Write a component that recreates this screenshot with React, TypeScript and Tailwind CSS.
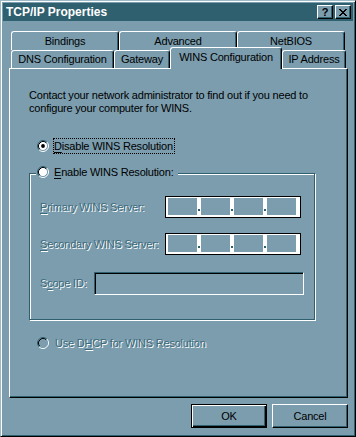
import React from 'react';

function Radio({ checked = false, disabled = false }: { checked?: boolean; disabled?: boolean }) {
  return (
    <svg width="12" height="12" viewBox="0 0 12 12" className="shrink-0 block">
      <circle cx="6" cy="6" r="4.5" fill={disabled ? '#7b9dae' : '#ffffff'} />
      <path d="M2.11 9.89 A5.5 5.5 0 0 1 9.89 2.11" fill="none" stroke="#2f6070" strokeWidth="1" />
      <path d="M9.89 2.11 A5.5 5.5 0 0 1 2.11 9.89" fill="none" stroke="#ffffff" strokeWidth="1" />
      <path d="M2.82 9.18 A4.5 4.5 0 0 1 9.18 2.82" fill="none" stroke="#000000" strokeWidth="1" />
      <path d="M9.18 2.82 A4.5 4.5 0 0 1 2.82 9.18" fill="none" stroke="#7b9dae" strokeWidth="1" />
      {checked && <circle cx="6" cy="6" r="1.9" fill="#000000" />}
    </svg>
  );
}

function U({ children }: { children: React.ReactNode }) {
  return <span className="underline underline-offset-[2px]">{children}</span>;
}

const dis = 'text-[#3d6a7a] [text-shadow:1px_1px_0_#ffffff]';

function IpBox() {
  const seg = 'w-[29px] h-full bg-[#7b9dae]';
  const sep = (
    <div className="relative w-[4px] h-full">
      <div className="absolute left-[1px] bottom-[4px] w-[2px] h-[2px] bg-[#2f6070]" />
    </div>
  );
  return (
    <div className="flex h-[22px] w-[136px] border border-black bg-white pl-[2px] pr-[4px] pt-[1px] pb-[2px]">
      <div className={seg} />
      {sep}
      <div className={seg} />
      {sep}
      <div className={seg} />
      {sep}
      <div className={seg} />
    </div>
  );
}

function BackTab({ label, cls }: { label: string; cls: string }) {
  return (
    <div
      className={`${cls} h-full flex items-center justify-center border-t border-l border-r border-t-white border-l-white border-r-black rounded-t-[3px] shadow-[inset_-1px_0_0_#2f6070]`}
    >
      {label}
    </div>
  );
}

function FrontTab({ label, cls }: { label: string; cls: string }) {
  return (
    <div
      className={`${cls} h-[18px] flex items-center justify-center border-t border-l border-r border-t-white border-l-white border-r-black rounded-t-[3px] shadow-[inset_-1px_0_0_#2f6070]`}
    >
      {label}
    </div>
  );
}

export default function App() {
  return (
    <div className="w-[356px] h-[437px] bg-[#7b9dae] font-['Liberation_Sans',Arial,sans-serif] text-[11px] leading-[13px] tracking-[-0.2px] text-black border border-t-[#9fbac7] border-l-[#9fbac7] border-r-black border-b-black shadow-[inset_1px_1px_0_#ffffff,inset_-1px_-1px_0_#2f6070] p-[2px] flex flex-col overflow-hidden">
      {/* Title bar */}
      <div className="h-[18px] shrink-0 bg-[#2f6070] flex items-center pl-[3px] pr-[2px]">
        <div className="flex-1 text-white font-bold text-[12px] tracking-[0px] leading-[14px]">TCP/IP Properties</div>
        <div className="flex gap-[2px]">
          <div className="w-[16px] h-[14px] bg-[#7b9dae] border-t border-l border-r border-b border-t-white border-l-white border-r-black border-b-black shadow-[inset_-1px_-1px_0_#2f6070] flex items-center justify-center font-bold text-[11px] leading-[11px] tracking-[0px]">
            ?
          </div>
          <div className="w-[16px] h-[14px] bg-[#7b9dae] border-t border-l border-r border-b border-t-white border-l-white border-r-black border-b-black shadow-[inset_-1px_-1px_0_#2f6070] flex items-center justify-center">
            <svg width="8" height="7" viewBox="0 0 8 7" className="block" shapeRendering="crispEdges">
              <path d="M0 0h2v1h-2zM6 0h2v1h-2zM1 1h2v1h-2zM5 1h2v1h-2zM2 2h4v1h-4zM3 3h2v1h-2zM2 4h4v1h-4zM1 5h2v1h-2zM5 5h2v1h-2zM0 6h2v1h-2zM6 6h2v1h-2z" fill="#000" />
            </svg>
          </div>
        </div>
      </div>

      {/* Content */}
      <div className="flex-1 flex flex-col pl-[6px] pr-[5px] pt-[10px]">
        {/* Tabs */}
        <div className="flex flex-col">
          <div className="flex h-[19px] pl-[2px]">
            <BackTab label="Bindings" cls="w-[108px]" />
            <BackTab label="Advanced" cls="w-[118px]" />
            <BackTab label="NetBIOS" cls="w-[108px]" />
          </div>
          <div className="flex h-[18px] pl-[2px] items-end">
            <FrontTab label="DNS Configuration" cls="w-[103px]" />
            <FrontTab label="Gateway" cls="w-[56px]" />
            <div className="w-[112px] h-[22px] -mb-[1px] relative z-10 bg-[#7b9dae] flex items-center justify-center pb-[2px] border-t border-l border-r border-t-white border-l-white border-r-black rounded-t-[3px] shadow-[inset_-1px_0_0_#2f6070]">
              WINS Configuration
            </div>
            <FrontTab label="IP Address" cls="w-[64px]" />
          </div>
        </div>

        {/* Panel */}
        <div className="h-[330px] shrink-0 border border-t-white border-l-white border-r-black border-b-black shadow-[inset_-1px_-1px_0_#2f6070] pl-[19px] pt-[20px] flex flex-col items-start">
          <p>
            Contact your network administrator to find out if you need to
            <br />
            configure your computer for WINS.
          </p>

          <div className="mt-[23px] ml-[8px] h-[16px] flex items-center gap-[4px]">
            <Radio checked />
            <span className="border border-dotted border-black h-[16px] flex items-center pr-[1px]">
              <U>D</U>isable WINS Resolution
            </span>
          </div>

          <div className="mt-[19px] relative w-[286px] h-[147px] border border-[#2f6070] shadow-[inset_1px_1px_0_#ffffff,1px_1px_0_#ffffff] pl-[10px] pt-[22px] flex flex-col">
            <div className="absolute left-[6px] top-[-10px] h-[16px] bg-[#7b9dae] pl-[1px] pr-[3px] flex items-center gap-[4px]">
              <Radio />
              <span className="border border-transparent">
                <U>E</U>nable WINS Resolution:
              </span>
            </div>

            <div className="flex items-center h-[22px]">
              <span className={`w-[125px] ${dis}`}>
                <U>P</U>rimary WINS Server:
              </span>
              <IpBox />
            </div>
            <div className="flex items-center h-[22px] mt-[15px]">
              <span className={`w-[125px] ${dis}`}>
                <U>S</U>econdary WINS Server:
              </span>
              <IpBox />
            </div>
            <div className="flex items-center h-[23px] mt-[17px]">
              <span className={`w-[54px] ${dis}`}>
                S<U>c</U>ope ID:
              </span>
              <div className="w-[210px] h-[23px] border border-t-[#2f6070] border-l-[#2f6070] border-r-white border-b-white shadow-[inset_1px_1px_0_#000000,inset_-1px_-1px_0_#7b9dae]" />
            </div>
          </div>

          <div className="mt-[15px] ml-[8px] h-[16px] flex items-center gap-[4px]">
            <Radio disabled />
            <span className={`border border-transparent pl-[1px] ${dis}`}>
              Use D<U>H</U>CP for WINS Resolution
            </span>
          </div>
        </div>

        {/* Buttons */}
        <div className="mt-[6px] flex justify-end gap-[5px]">
          <button className="w-[76px] h-[24px] border border-black shadow-[inset_1px_1px_0_#ffffff,inset_-1px_-1px_0_#000000,inset_-2px_-2px_0_#2f6070] flex items-center justify-center">
            OK
          </button>
          <button className="w-[76px] h-[24px] border border-t-white border-l-white border-r-black border-b-black shadow-[inset_-1px_-1px_0_#2f6070] flex items-center justify-center">
            Cancel
          </button>
        </div>
      </div>
    </div>
  );
}
